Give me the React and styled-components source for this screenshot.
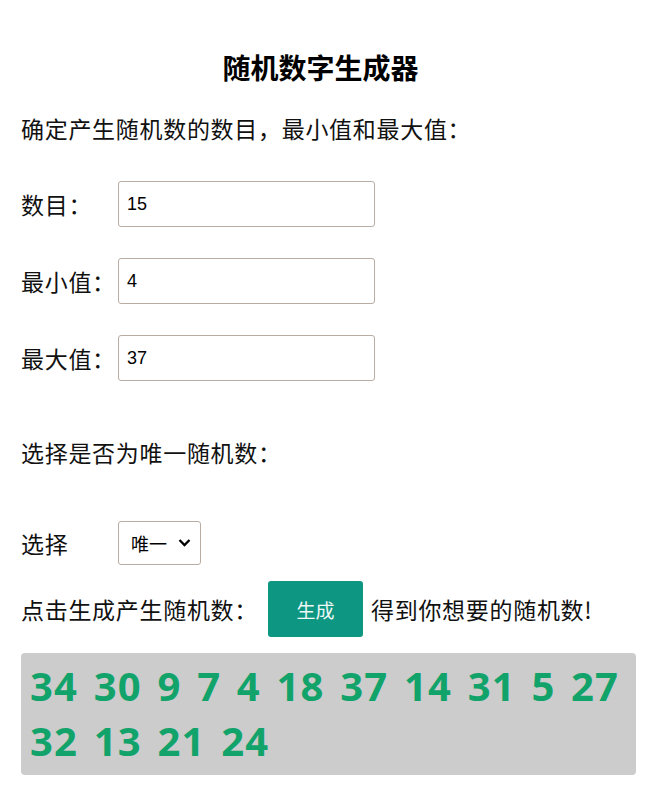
import React, { useState } from "react";
import styled, { createGlobalStyle } from "styled-components";

const Global = createGlobalStyle`
  html, body { margin: 0; padding: 0; background: #fff; }
  body { font-family: "Noto Sans CJK SC", "Noto Sans", sans-serif; color: #111; }
`;

const Page = styled.div`
  width: 646px;
  box-sizing: border-box;
  padding: 47px 10px 0 21px;
  display: flex;
  flex-direction: column;
`;

const Title = styled.h1`
  margin: 0;
  padding-right: 16px;
  text-align: center;
  font-size: 28px;
  line-height: 40px;
  font-weight: 700;
  color: #000;
`;

const Text = styled.p`
  margin: ${(p) => p.$top || 0}px 0 0;
  font-size: 23px;
  line-height: 32px;
  letter-spacing: 0.7px;
  font-weight: 400;
`;

const Row = styled.div`
  display: flex;
  align-items: center;
  margin-top: ${(p) => p.$top || 0}px;
`;

const Label = styled.label`
  width: 97px;
  flex: none;
  font-size: 23px;
  line-height: 32px;
  letter-spacing: 0.7px;
`;

const Input = styled.input`
  box-sizing: border-box;
  width: 257px;
  height: 46px;
  padding: 0 8px;
  border: 1px solid #b9aca3;
  border-radius: 3px;
  font-family: "Liberation Sans", Arial, sans-serif;
  font-size: 18px;
  color: #000;
  outline: none;
`;

const SelectWrap = styled.div`
  position: relative;
  width: 83px;
  height: 44px;
`;

const Select = styled.select`
  appearance: none;
  box-sizing: border-box;
  width: 100%;
  height: 100%;
  padding: 0 0 0 12px;
  border: 1px solid #b9aca3;
  border-radius: 3px;
  background: #fff;
  font-family: "Noto Sans CJK SC", sans-serif;
  font-size: 18px;
  color: #000;
`;

const Chevron = styled.svg`
  position: absolute;
  right: 10px;
  top: 50%;
  transform: translateY(-50%);
  pointer-events: none;
`;

const Button = styled.button`
  width: 95px;
  height: 56px;
  margin: 0 8px 0 10px;
  border: none;
  border-radius: 3px;
  background: #0d9682;
  color: #eef8f6;
  font-family: "Noto Sans CJK SC", sans-serif;
  font-size: 19px;
  cursor: pointer;
`;

const Inline = styled.span`
  font-size: 23px;
  line-height: 32px;
  letter-spacing: 0.7px;
`;

const Result = styled.div`
  margin-top: 16px;
  box-sizing: border-box;
  width: 615px;
  padding: 6px 8px 7px 9px;
  background: #cccccc;
  border-radius: 4px;
  font-family: "Open Sans", sans-serif;
  font-weight: 700;
  font-size: 40px;
  line-height: 54.5px;
  letter-spacing: 1.2px;
  word-spacing: 4px;
  color: #12a36b;
`;

export default function App() {
  const [count, setCount] = useState("15");
  const [min, setMin] = useState("4");
  const [max, setMax] = useState("37");
  const nums = [34, 30, 9, 7, 4, 18, 37, 14, 31, 5, 27, 32, 13, 21, 24];
  return (
    <>
      <Global />
      <Page>
        <Title>随机数字生成器</Title>
        <Text $top={25}>确定产生随机数的数目，最小值和最大值：</Text>
        <Row $top={37}>
          <Label>数目：</Label>
          <Input value={count} onChange={(e) => setCount(e.target.value)} />
        </Row>
        <Row $top={31}>
          <Label>最小值：</Label>
          <Input value={min} onChange={(e) => setMin(e.target.value)} />
        </Row>
        <Row $top={31}>
          <Label>最大值：</Label>
          <Input value={max} onChange={(e) => setMax(e.target.value)} />
        </Row>
        <Text $top={55}>选择是否为唯一随机数：</Text>
        <Row $top={53}>
          <Label>选择</Label>
          <SelectWrap>
            <Select defaultValue="unique">
              <option value="unique">唯一</option>
              <option value="repeat">可重复</option>
            </Select>
            <Chevron width="13" height="9" viewBox="0 0 13 9">
              <path d="M1.5 1.5 L6.5 6.5 L11.5 1.5" fill="none" stroke="#000" strokeWidth="2.3" />
            </Chevron>
          </SelectWrap>
        </Row>
        <Row $top={16}>
          <Inline>点击生成产生随机数：</Inline>
          <Button>生成</Button>
          <Inline>得到你想要的随机数!</Inline>
        </Row>
        <Result>{nums.join(" ")}</Result>
      </Page>
    </>
  );
}
